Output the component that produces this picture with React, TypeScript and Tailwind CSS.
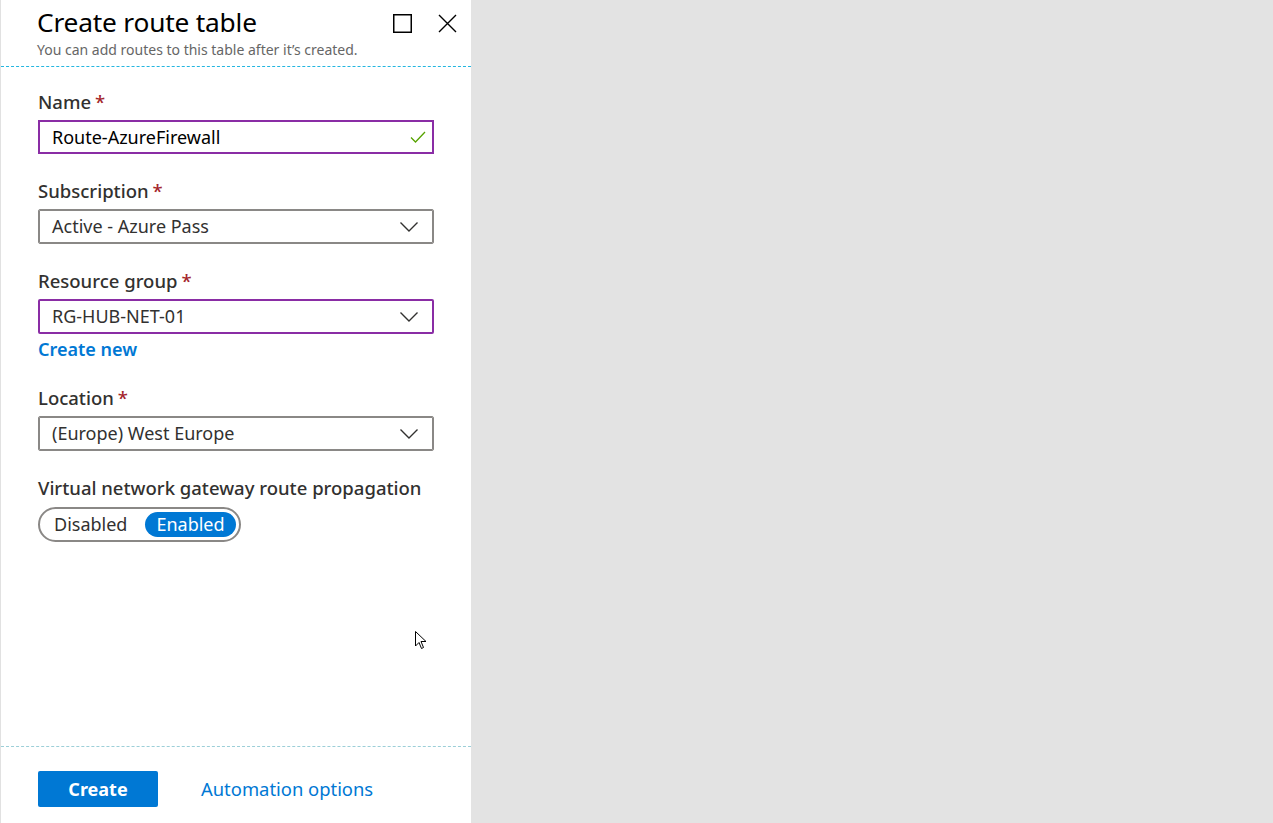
import React from "react";

const Star = () => <span className="text-[#a4262c] ml-1">*</span>;

const Chevron = () => (
  <svg width="20" height="12" viewBox="0 0 20 12" fill="none" className="shrink-0">
    <path d="M1.5 1.5 L10 10 L18.5 1.5" stroke="#323130" strokeWidth="1.4" />
  </svg>
);

function Select({ value, focused }: { value: string; focused?: boolean }) {
  return (
    <div
      className={
        focused
          ? "h-[35px] flex items-center justify-between pl-[12px] pr-[13px] border-2 border-[#8a2da5] rounded-[2px]"
          : "h-[35px] flex items-center justify-between pl-[13px] pr-[14px] border border-[#8a8886] rounded-[2px] shadow-[inset_0_0_0_1px_#8a8886]"
      }
    >
      <span className="text-[18px] text-[#323130]">{value}</span>
      <Chevron />
    </div>
  );
}

export default function App() {
  return (
    <div
      className="w-[1273px] h-[823px] flex bg-[#e3e3e3] overflow-hidden relative"
      style={{ fontFamily: '"Segoe UI", "Noto Sans", "Open Sans", sans-serif' }}
    >
      <div className="w-[471px] h-full bg-white border-l border-[#e1e1e1] flex flex-col">
        {/* header */}
        <div className="flex items-start justify-between pl-[36px] pr-[14px] pt-[4px] h-[67px] border-b border-dashed border-[#24b6e0]">
          <div className="flex flex-col">
            <h1 className="text-[26.3px] leading-[36px] text-black tracking-[-0.2px]">Create route table</h1>
            <p className="text-[14px] leading-[19px] text-[#666666]">
              You can add routes to this table after it’s created.
            </p>
          </div>
          <div className="flex items-center gap-[26px] pt-[10px]">
            <svg width="19" height="19" viewBox="0 0 19 19" fill="none">
              <rect x="0.75" y="0.75" width="17.5" height="17.5" stroke="#000" strokeWidth="1.5" />
            </svg>
            <svg width="19" height="19" viewBox="0 0 19 19" fill="none">
              <path d="M1 1 L18 18 M18 1 L1 18" stroke="#000" strokeWidth="1.4" />
            </svg>
          </div>
        </div>

        {/* form */}
        <div className="flex-1 pl-[37px] pr-[37px] pt-[23px] flex flex-col">
          <label className="text-[18.5px] leading-[24px] text-[#323130] font-medium">
            Name<Star />
          </label>
          <div className="mt-[6px] h-[34px] flex items-center justify-between pl-[12px] pr-[6px] border-2 border-[#8a2da5]">
            <span className="text-[18px] text-[#000]">Route-AzureFirewall</span>
            <svg width="16" height="12" viewBox="0 0 16 12" fill="none">
              <path d="M1 6.5 L5.5 11 L15 1" stroke="#57a300" strokeWidth="1.3" />
            </svg>
          </div>

          <label className="mt-[25px] text-[18.5px] leading-[24px] text-[#323130] font-medium">
            Subscription<Star />
          </label>
          <div className="mt-[6px]">
            <Select value="Active - Azure Pass" />
          </div>

          <label className="mt-[25px] text-[18.5px] leading-[24px] text-[#323130] font-medium">
            Resource group<Star />
          </label>
          <div className="mt-[6px]">
            <Select value="RG-HUB-NET-01" focused />
          </div>
          <a className="mt-[3px] text-[18px] leading-[24px] text-[#0078d4] font-semibold">Create new</a>

          <label className="mt-[25px] text-[18.5px] leading-[24px] text-[#323130] font-medium">
            Location<Star />
          </label>
          <div className="mt-[6px]">
            <Select value="(Europe) West Europe" />
          </div>

          <label className="mt-[25px] text-[18.5px] leading-[24px] text-[#323130] font-medium">
            Virtual network gateway route propagation
          </label>
          <div className="mt-[7px] self-start h-[35px] w-[203px] flex items-center pl-[14px] pr-[3px] border-2 border-[#8a8886] rounded-full">
            <span className="text-[18px] text-[#323130] w-[92px]">Disabled</span>
            <span className="h-[25px] w-[92px] flex items-center justify-center rounded-full bg-[#0078d4] text-white text-[18px]">
              Enabled
            </span>
          </div>
        </div>

        {/* footer */}
        <div className="h-[77px] border-t border-dashed border-[#9ccfd8] flex items-start pl-[37px] pt-[24px] gap-[43px]">
          <button className="h-[36px] w-[120px] bg-[#0078d4] rounded-[2px] text-white text-[18px] font-bold">
            Create
          </button>
          <a className="text-[18.4px] leading-[36px] text-[#0078d4]">Automation options</a>
        </div>
      </div>

      {/* mouse cursor overlay */}
      <svg className="absolute left-[415px] top-[631px]" width="13" height="20" viewBox="0 0 13 20" fill="none">
        <path d="M0.5 0.5 L0.5 15 L4 11.5 L6.5 17.5 L8.5 16.5 L6 10.5 L11 10.5 Z" fill="#fff" stroke="#000" strokeWidth="1" />
      </svg>
    </div>
  );
}
